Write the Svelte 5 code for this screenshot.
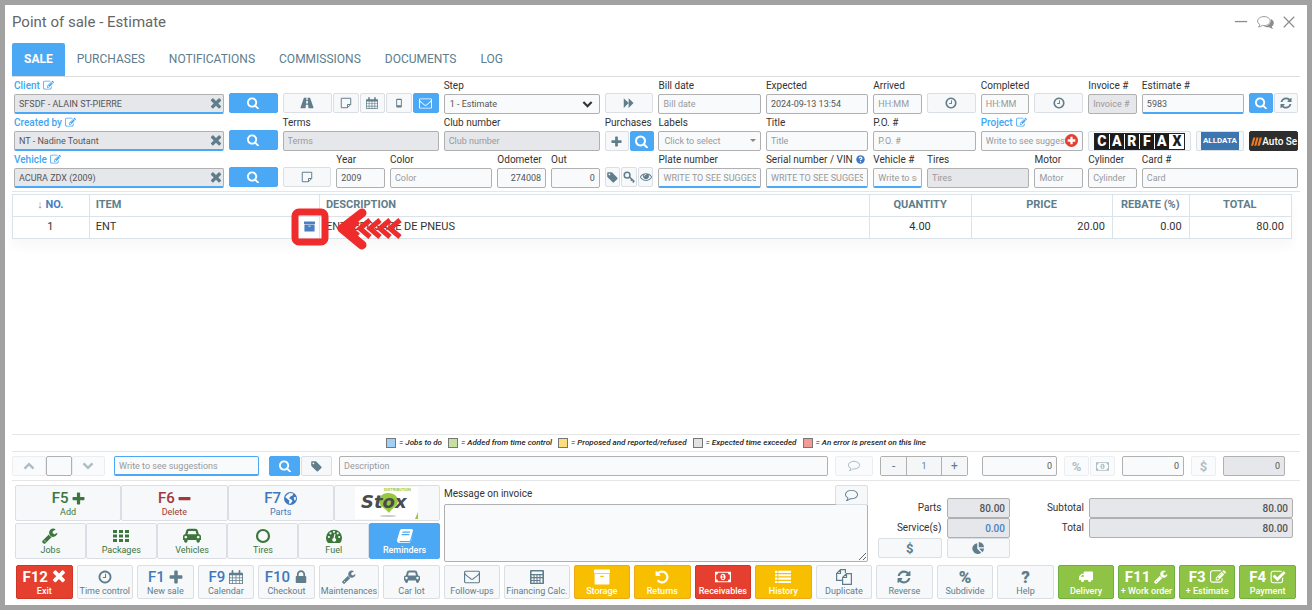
<script lang="ts">
    // [viewBox, shape markup]
    const icons: Record<string, [string, string]> = {
        search: ["64 64 1664 1664", '<path d="M1216 832q0-185-131.5-316.5t-316.5-131.5-316.5 131.5-131.5 316.5 131.5 316.5 316.5 131.5 316.5-131.5 131.5-316.5zm512 832q0 52-38 90t-90 38q-54 0-90-38l-343-342q-179 124-399 124-143 0-273.5-55.5t-225-150-150-225-55.5-273.5 55.5-273.5 150-225 225-150 273.5-55.5 273.5 55.5 225 150 150 225 55.5 273.5q0 220-124 399l343 343q37 37 37 90z"/>'],
        edit: ["0 0 1792 1792", '<path d="M888 1184l116-116-152-152-116 116v56h96v96h56zm440-720q-16-16-33 1l-350 350q-17 17-1 33t33-1l350-350q17-17 1-33zm80 594v190q0 119-84.5 203.5t-203.5 84.5h-832q-119 0-203.5-84.5t-84.5-203.5v-832q0-119 84.5-203.5t203.5-84.5h832q63 0 117 25 15 7 18 23 3 17-9 29l-49 49q-14 14-32 8-23-6-45-6h-832q-66 0-113 47t-47 113v832q0 66 47 113t113 47h832q66 0 113-47t47-113v-126q0-13 9-22l64-64q15-15 35-7t20 29zm-96-738l288 288-672 672h-288v-288zm444 132l-92 92-288-288 92-92q28-28 68-28t68 28l152 152q28 28 28 68t-28 68z"/>'],
        times: ["200 332 1392 1392", '<path d="M1490 1322q0 40-28 68l-136 136q-28 28-68 28t-68-28l-294-294-294 294q-28 28-68 28t-68-28l-136-136q-28-28-28-68t28-68l294-294-294-294q-28-28-28-68t28-68l136-136q28-28 68-28t68 28l294 294 294-294q28-28 68-28t68 28l136 136q28 28 28 68t-28 68l-294 294 294 294q28 28 28 68z"/>'],
        plus: ["128 64 1536 1536", '<path d="M1600 736v192q0 40-28 68t-68 28h-416v416q0 40-28 68t-68 28h-192q-40 0-68-28t-28-68v-416h-416q-40 0-68-28t-28-68v-192q0-40 28-68t68-28h416v-416q0-40 28-68t68-28h192q40 0 68 28t28 68v416h416q40 0 68 28t28 68z"/>'],
        minus: ["128 64 1536 1536", '<path d="M1600 736v192q0 40-28 68t-68 28h-1216q-40 0-68-28t-28-68v-192q0-40 28-68t68-28h1216q40 0 68 28t28 68z"/>'],
        clock: ["64 64 1664 1664", '<path d="M1024 544v448q0 14-9 23t-23 9h-320q-14 0-23-9t-9-23v-64q0-14 9-23t23-9h224v-352q0-14 9-23t23-9h64q14 0 23 9t9 23zm416 352q0-148-73-273t-198-198-273-73-273 73-198 198-73 273 73 273 198 198 273 73 273-73 198-198 73-273zm224 0q0 209-103 385.5t-279.5 279.5-385.5 103-385.5-103-279.5-279.5-103-385.5 103-385.5 279.5-279.5 385.5-103 385.5 103 279.5 279.5 103 385.5z"/>'],
        refresh: ["64 64 1664 1664", '<path d="M1639 1056q0 5-1 7-64 268-268 434.5t-478 166.5q-146 0-282.5-55t-243.5-157l-129 129q-19 19-45 19t-45-19-19-45v-448q0-26 19-45t45-19h448q26 0 45 19t19 45-19 45l-137 137q71 66 161 102t187 36q134 0 250-65t186-179q11-17 53-117 8-23 30-23h192q13 0 22.5 9.5t9.5 22.5zm25-800v448q0 26-19 45t-45 19h-448q-26 0-45-19t-19-45 19-45l138-138q-148-137-349-137-134 0-250 65t-186 179q-11 17-53 117-8 23-30 23h-199q-13 0-22.5-9.5t-9.5-22.5v-7q65-268 270-434.5t480-166.5q146 0 284 55.5t245 156.5l130-129q19-19 45-19t45 19 19 45z"/>'],
        wrench: ["64 64 1728 1728", '<path d="M448 1472q0-26-19-45t-45-19-45 19-19 45 19 45 45 19 45-19 19-45zm644-420l-682 682q-37 37-90 37-52 0-91-37l-106-108q-38-36-38-90 0-53 38-91l681-681q39 98 114.5 173.5t173.5 114.5zm634-435q0 39-23 106-47 134-164.5 217.5t-258.5 83.5q-185 0-316.5-131.5t-131.5-316.5 131.5-316.5 316.5-131.5q58 0 121.5 16.5t107.5 46.5q16 11 16 28t-16 28l-293 169v224l193 107q5-3 79-48.5t135.5-81 70.5-35.5q15 0 23.5 10t8.5 25z"/>'],
        lock: ["256 100 1280 1536", '<path d="M640 768h512v-192q0-106-75-181t-181-75-181 75-75 181v192zm832 96v576q0 40-28 68t-68 28h-960q-40 0-68-28t-28-68v-576q0-40 28-68t68-28h32v-192q0-184 132-316t316-132 316 132 132 316v192h32q40 0 68 28t28 68z"/>'],
        archive: ["64 96 1664 1600", '<path d="M1088 832q0-26-19-45t-45-19h-256q-26 0-45 19t-19 45 19 45 45 19h256q26 0 45-19t19-45zm576-192v960q0 26-19 45t-45 19h-1408q-26 0-45-19t-19-45v-960q0-26 19-45t45-19h1408q26 0 45 19t19 45zm64-448v256q0 26-19 45t-45 19h-1536q-26 0-45-19t-19-45v-256q0-26 19-45t45-19h1536q26 0 45 19t19 45z"/>'],
        undo: ["64 64 1664 1664", '<path d="M1664 896q0 156-61 298t-164 245-245 164-298 61q-172 0-327-72.5t-264-204.5q-7-10-6.5-22.5t8.5-20.5l137-138q10-9 25-9 16 2 23 12 73 95 179 147t225 52q104 0 198.5-40.5t163.5-109.5 109.5-163.5 40.5-198.5-40.5-198.5-109.5-163.5-163.5-109.5-198.5-40.5q-98 0-188 35.5t-160 101.5l137 138q31 30 14 69-17 40-59 40h-448q-26 0-45-19t-19-45v-448q0-42 40-59 39-17 69 14l130 129q107-101 244.5-156.5t284.5-55.5q156 0 298 61t245 164 164 245 61 298z"/>'],
        envelope: ["0 64 1792 1792", '<path d="M1664 1504v-768q-32 36-69 66-268 206-426 338-51 43-83 67t-86.5 48.5-102.5 24.5h-2q-48 0-102.5-24.5t-86.5-48.5-83-67q-158-132-426-338-37-30-69-66v768q0 13 9.5 22.5t22.5 9.5h1472q13 0 22.5-9.5t9.5-22.5zm0-1051v-24.5l-.5-13-3-12.5-5.5-9-9-7.5-14-2.5h-1472q-13 0-22.5 9.5t-9.5 22.5q0 168 147 284 193 152 401 317 6 5 35 29.5t46 37.5 44.5 31.5 50.5 27.5 43 9h2q20 0 43-9t50.5-27.5 44.5-31.5 46-37.5 35-29.5q208-165 401-317 54-43 100.5-115.5t46.5-131.5zm128-37v1088q0 66-47 113t-113 47h-1472q-66 0-113-47t-47-113v-1088q0-66 47-113t113-47h1472q66 0 113 47t47 113z"/>'],
        comment: ["0 128 1792 1792", '<path d="M896 384q-204 0-381.5 69.5t-282 187.5-104.5 255q0 112 71.5 213.5t201.5 175.5l87 50-27 96q-24 91-70 172 152-63 275-171l43-38 57 6q69 8 130 8 204 0 381.5-69.5t282-187.5 104.5-255-104.5-255-282-187.5-381.5-69.5zm896 512q0 174-120 321.5t-326 233-450 85.5q-70 0-145-8-198 175-460 242-49 14-114 22h-5q-15 0-27-10.5t-16-27.5v-1q-3-4-.5-12t2-10 4.500-9.500l6-9 7-8.500 8-9q7-8 31-34.500t34.500-38 31-39.500 32.500-51 27-59 26-76q-157-89-247.500-220t-90.500-281q0-174 120-321.500t326-233 450-85.500 450 85.500 326 233 120 321.500z"/>'],
        tag: ["100 100 1600 1600", '<path d="M576 448q0-53-37.5-90.5t-90.5-37.5-90.5 37.5-37.5 90.5 37.5 90.5 90.5 37.5 90.5-37.5 37.5-90.5zm1067 576q0 53-37 90l-491 492q-39 37-91 37-53 0-90-37l-715-716q-38-37-64.5-101t-26.5-117v-416q0-52 38-90t90-38h416q53 0 117 26.5t102 64.5l715 714q37 39 37 91z"/>'],
        eye: ["0 64 1792 1792", '<path d="M1664 960q-152-236-381-353 61 104 61 225 0 185-131.5 316.5t-316.5 131.5-316.5-131.5-131.5-316.5q0-121 61-225-229 117-381 353 133 205 333.5 326.5t434.5 121.5 434.5-121.5 333.5-326.5zm-720-384q0-20-14-34t-34-14q-125 0-214.5 89.5t-89.5 214.5q0 20 14 34t34 14 34-14 14-34q0-86 61-147t147-61q20 0 34-14t14-34zm848 384q0 34-20 69-140 230-376.5 368.5t-499.5 138.5-499.5-139-376.5-368q-20-35-20-69t20-69q140-229 376.5-368t499.5-139 499.5 139 376.5 368q20 35 20 69z"/>'],
        check: ["0 0 1792 1664", '<path d="M1472 930v318q0 119-84.5 203.5t-203.5 84.5h-832q-119 0-203.5-84.5t-84.5-203.5v-832q0-119 84.5-203.5t203.5-84.5h832q63 0 117 25 15 7 18 23 3 17-9 29l-49 49q-10 10-23 10-3 0-9-2-23-6-45-6h-832q-66 0-113 47t-47 113v832q0 66 47 113t113 47h832q66 0 113-47t47-113v-254q0-13 9-22l64-64q10-10 23-10 6 0 12 3 20 8 20 29zm231-489l-814 814q-24 24-57 24t-57-24l-430-430q-24-24-24-57t24-57l110-110q24-24 57-24t57 24l263 263 647-647q24-24 57-24t57 24l110 110q24 24 24 57t-24 57z"/>'],
        car: ["0 128 2048 1664", '<path d="M480 1088q0-66-47-113t-113-47-113 47-47 113 47 113 113 47 113-47 47-113zm36-320h1016l-89-357q-2-8-14-17.5t-21-9.5h-768q-9 0-21 9.5t-14 17.5zm1372 320q0-66-47-113t-113-47-113 47-47 113 47 113 113 47 113-47 47-113zm160-96v384q0 14-9 23t-23 9h-96v128q0 80-56 136t-136 56-136-56-56-136v-128h-1024v128q0 80-56 136t-136 56-136-56-56-136v-128h-96q-14 0-23-9t-9-23v-384q0-93 65.5-158.5t158.5-65.5h28l105-419q23-94 104-157.5t179-63.5h768q98 0 179 63.5t104 157.5l105 419h28q93 0 158.5 65.5t65.5 158.5z"/>'],
        road: ["0 0 16 14", '<path fill-rule="evenodd" d="M4.500 1h2.900l-.2 2.500h1.600L8.600 1h2.900l3.900 11.200q.3.800-.5.800H9.600l-.3-4H6.700l-.3 4H1.100q-.8 0-.5-.8zM7.100 4.500 6.900 7.500h2.200l-.2-3z"/>'],
        note: ["0 0 16 16", '<path fill="none" stroke="currentColor" stroke-width="1.300" d="M1.700 1.700h12.600v8.300l-4.300 4.300H1.700zM14.300 10H10v4.300"/>'],
        calendar: ["0 0 16 16", '<path fill-rule="evenodd" d="M1 3h2V1q0-1 1-1t1 1v2h6V1q0-1 1-1t1 1v2h2q1 0 1 1v11q0 1-1 1H1q-1 0-1-1V4q0-1 1-1zM1 6v2.600h2.700V6zm3.500 0v2.600h3V6zm3.900 0v2.600h3V6zm3.800 0v2.600H15V6zM1 9.400v2.200h2.700V9.400zm3.500 0v2.200h3V9.400zm3.900 0v2.200h3V9.400zm3.800 0v2.200H15V9.400zM1 12.500V15h2.700v-2.500zm3.500 0V15h3v-2.500zm3.900 0V15h3v-2.500zm3.800 0V15H15v-2.500z"/>'],
        mobile: ["0 0 16 16", '<path fill-rule="evenodd" d="M5 1h6q1.500 0 1.500 1.500v11Q12.500 15 11 15H5q-1.500 0-1.500-1.500v-11Q3.500 1 5 1zm0 2v8.500h6V3z"/>'],
        forward: ["0 0 16 16", '<path d="M1 1.500 7.500 8V1.500L14 8l-6.500 6.500V8L1 14.500z"/>'],
        key: ["0 0 16 16", '<g fill="none" stroke="currentColor" stroke-width="2"><circle cx="5.500" cy="5.500" r="3.800"/><path d="m8.500 8 6 5.500M10.500 13l2-2.600M13 15.300l2-2.400"/></g>'],
        question: ["0 0 16 16", '<circle cx="8" cy="8" r="7.500"/><path fill="none" stroke="#fff" stroke-width="2.200" d="M5.500 6q.2-2.300 2.500-2.300T10.500 6Q10.500 7.300 8 8.200v1.300M8 10.800V13"/>'],
        plusCircle: ["0 0 16 16", '<circle cx="8" cy="8" r="8"/><path fill="none" stroke="#fff" stroke-width="2.800" d="M8 3.300v9.400M3.300 8h9.400"/>'],
        globe: ["0 0 16 16", '<circle cx="8" cy="8" r="8"/><path fill="#f6f8fa" d="m7 1.200 4.500.7-1 2.300L8 5.500 6.200 7.600l2.800 1.600 1.500 1.800-2.500 3.600L6 14l.5-3.500L3.500 8 1.500 6l2.600-3zM12 6l2.800.6-.4 3.200-1.600.6z"/>'],
        grid: ["0 0 16 12", '<path d="M0 0h4v3H0zM6 0h4v3H6zM12 0h4v3h-4zM0 4.500h4v3H0zM6 4.500h4v3H6zM12 4.500h4v3h-4zM0 9h4v3H0zM6 9h4v3H6zM12 9h4v3h-4z"/>'],
        circle: ["0 0 16 16", '<circle cx="8" cy="8" r="6" fill="none" stroke="currentColor" stroke-width="2.200"/>'],
        gauge: ["0 0 16 14", '<path d="M2 14a8 8 0 1 1 12 0z"/><g fill="#f6f8fa"><circle cx="2.900" cy="8" r="1.100"/><circle cx="4.500" cy="4.300" r="1.100"/><circle cx="8" cy="2.800" r="1.100"/><circle cx="11.700" cy="4.300" r="1.100"/><circle cx="13.200" cy="8" r="1.100"/><path d="m8.500 4.800 1 .2-.6 4A2 2 0 1 1 7.500 9z"/></g>'],
        book: ["0 0 16 14", '<path fill-rule="evenodd" d="M5.200 0h9.600q1.400.3 1.100 1.800l-2.700 9.400q-.3.900-1.300.9H3.200q-1 0-1 .4.100.7 1 .7h9.800q.7 0 1-.8L16.400 4l-2.900 9.300q-.3.700-1 .7H2.500Q.2 14-.1 11.500L2.900 1.400Q3.500 0 5.200 0zm.4 2.500-.3 1.200h7.600l.4-1.200zm-.8 2.600-.4 1.200h7.700l.4-1.200z"/>'],
        calculator: ["0 0 16 16", '<path fill-rule="evenodd" d="M1 0h14q1 0 1 1v14q0 1-1 1H1q-1 0-1-1V1q0-1 1-1zm.8 1.800v2.700h12.400V1.800zm0 4.200v2h2.200V6zm3.400 0v2h2.200V6zm3.400 0v2h2.200V6zm3.400 0v2h2.200V6zm-10.200 3.300v2h2.200v-2zm3.400 0v2h2.200v-2zm3.400 0v2h2.200v-2zm3.400 0v5.200h2.200V9.300zM1.800 12.500v2h2.200v-2zm3.400 0v2h2.200v-2zm3.400 0v2h2.200v-2z"/>'],
        money: ["0 0 18 12", '<path fill-rule="evenodd" d="M0 0h18v12H0zm3.500 1.300A2.300 2.300 0 0 1 1.300 3.500v5a2.300 2.300 0 0 1 2.200 2.200h11a2.300 2.300 0 0 1 2.200-2.200v-5a2.300 2.300 0 0 1-2.200-2.200zM9 2.300c1.700 0 2.900 1.700 2.900 3.700S10.700 9.700 9 9.700 6.100 8 6.100 6 7.300 2.300 9 2.300zM8.600 3.500 7.400 4.600l.5.6.5-.3v2.600h-.9v.8h2.800v-.8h-.8v-4z"/>'],
        list: ["0 0 18 14", '<path d="M0 0h2.700v2.400H0zM3.700 0H18v2.400H3.700zM0 3.800h2.700v2.400H0zM3.700 3.800H18v2.400H3.700zM0 7.600h2.700V10H0zM3.700 7.600H18V10H3.700zM0 11.400h2.700v2.400H0zM3.700 11.400H18v2.400H3.700z"/>'],
        copy: ["0 0 16 16", '<path fill="none" stroke="currentColor" stroke-width="1.200" d="M6.500 11.400H.6V4.500L4.500.6h4.900V4M4.500.8v3.700H.8M6.600 8.500l3.900-3.900h4.900v10.800H6.600zM10.500 4.800v3.700H6.800"/>'],
        truck: ["0 0 18 14", '<path fill-rule="evenodd" d="M7 0h10q1 0 1 1v10h-2a2.200 2.200 0 0 1-4.400 0H6.700a2.200 2.200 0 0 1-4.400 0H0V7q0-.8.500-1.400L3 3.300q.5-.4 1-.4h2V1q0-1 1-1zM2 6.800h4V4.400H4.200z"/><circle cx="4.500" cy="11.500" r="1.900"/><circle cx="13.800" cy="11.500" r="1.900"/>'],
        pie: ["0 0 16 16", '<path d="M7 1.500V9l5.300 5.200A7.200 7.200 0 1 1 7 1.500zM9 0a7 7 0 0 1 7 7H9zM9.500 8.500H16a7 7 0 0 1-2 5z"/>'],
        up: ["0 0 16 16", '<path fill="none" stroke="currentColor" stroke-width="3.200" d="m2 11.500 6-6 6 6"/>'],
        down: ["0 0 16 16", '<path fill="none" stroke="currentColor" stroke-width="3.200" d="m2 4.500 6 6 6-6"/>'],
        winMin: ["0 0 16 16", '<path stroke="currentColor" stroke-width="1.500" d="M1 7.500h14"/>'],
        winClose: ["0 0 16 16", '<path fill="none" stroke="currentColor" stroke-width="1.600" d="m1 1 14 14M15 1 1 15"/>'],
        chat: ["0 0 17 13", '<path d="M13.800 3c2 .9 3 2.200 3 3.900 0 1.400-.8 2.600-2 3.400q.2 1.500 1.500 2.500-2.500-.2-4-1.600-3 .6-5.600-.9c4.300 0 7.800-2.700 7.100-7.300z"/><path fill="#fff" stroke="currentColor" stroke-width=".9" d="M7 .6c3.600 0 6.200 2 6.200 4.500S10.600 9.600 7 9.600q-.8 0-1.600-.2Q4 10.700 1.500 11q1.200-1 1.300-2.500C1.400 7.700.6 6.500.6 5.100.600 2.600 3.400.600 7 .600z"/>'],
    };

    const tabs = ["Sale", "Purchases", "Notifications", "Commissions", "Documents", "Log"];

    const lines = [
        { no: 1, item: "ENT", description: "ENTREPOSAGE DE PNEUS", quantity: "4.00", price: "20.00", rebate: "0.00", total: "80.00" },
    ];

    const legend = [
        { color: "#9fd0f8", text: "Jobs to do" },
        { color: "#c5e1a0", text: "Added from time control" },
        { color: "#fbdf7d", text: "Proposed and reported/refused" },
        { color: "#e2e2e2", text: "Expected time exceeded" },
        { color: "#f29b94", text: "An error is present on this line" },
    ];

    const tools = [
        { icon: "wrench", text: "Jobs" },
        { icon: "grid", text: "Packages" },
        { icon: "car", text: "Vehicles" },
        { icon: "circle", text: "Tires" },
        { icon: "gauge", text: "Fuel" },
        { icon: "book", text: "Reminders", tone: "blue" },
    ];

    const actions = [
        { key: "F12", icon: "times", text: "Exit", tone: "red" },
        { icon: "clock", text: "Time control" },
        { key: "F1", icon: "plus", text: "New sale" },
        { key: "F9", icon: "calendar", text: "Calendar" },
        { key: "F10", icon: "lock", text: "Checkout" },
        { icon: "wrench", text: "Maintenances" },
        { icon: "car", text: "Car lot" },
        { icon: "envelope", text: "Follow-ups" },
        { icon: "calculator", text: "Financing Calc." },
        { icon: "archive", text: "Storage", tone: "yellow" },
        { icon: "undo", text: "Returns", tone: "yellow" },
        { icon: "money", text: "Receivables", tone: "red" },
        { icon: "list", text: "History", tone: "yellow" },
        { icon: "copy", text: "Duplicate" },
        { icon: "refresh", text: "Reverse" },
        { glyph: "%", text: "Subdivide" },
        { glyph: "?", text: "Help" },
        { icon: "truck", text: "Delivery", tone: "green" },
        { key: "F11", icon: "wrench", text: "+ Work order", tone: "green" },
        { key: "F3", icon: "edit", text: "+ Estimate", tone: "green" },
        { key: "F4", icon: "check", text: "Payment", tone: "green" },
    ];

    const wideIcons = ["car", "money", "list", "archive", "envelope", "edit", "check", "copy"];

    let activeTab = $state("Sale");
</script>

{#snippet icon(name: string, size = 12)}
    <svg class="icon" viewBox={icons[name][0]} width={size} height={size} fill="currentColor" aria-hidden="true">{@html icons[name][1]}</svg>
{/snippet}

{#snippet field(id: string, label: string, span: number, value = "", placeholder = "", kind = "")}
    <div class="cell span-{span}">
        <label for={id}>{label}</label>
        <input {id} class={kind} {value} {placeholder} />
    </div>
{/snippet}

{#snippet picker(id: string, label: string, value: string)}
    <div class="cell span-4">
        <label class="link" for={id}>{label} {@render icon("edit", 11)}</label>
        <div class="clearable">
            <input {id} class="locked required" {value} readonly />
            <button class="clear" aria-label="Clear {label}">{@render icon("times", 12)}</button>
        </div>
    </div>
    <div class="cell raised"><button class="btn blue" aria-label="Search {label}">{@render icon("search", 12)}</button></div>
{/snippet}

<div class="window">
    <header>
        <h1>Point of sale - Estimate</h1>
        <div class="controls">
            <button aria-label="Minimize">{@render icon("winMin", 14)}</button>
            <button aria-label="Chat">{@render icon("chat", 17)}</button>
            <button aria-label="Close">{@render icon("winClose", 12)}</button>
        </div>
    </header>

    <nav>
        {#each tabs as tab}
            <button class:active={activeTab === tab} onclick={() => (activeTab = tab)}>{tab}</button>
        {/each}
    </nav>

    <form class="sale" onsubmit={(e) => e.preventDefault()}>
        {@render picker("client", "Client", "SFSDF - ALAIN ST-PIERRE")}
        <div class="cell span-3 raised">
            <div class="group">
                <button class="btn wide" aria-label="Road test">{@render icon("road", 14)}</button>
                <button class="btn" aria-label="Note">{@render icon("note", 12)}</button>
                <button class="btn" aria-label="Calendar">{@render icon("calendar", 12)}</button>
                <button class="btn" aria-label="Text message">{@render icon("mobile", 10)}</button>
                <button class="btn blue" aria-label="Email">{@render icon("envelope", 13)}</button>
            </div>
        </div>
        <div class="cell span-3">
            <label for="step">Step</label>
            <div class="select">
                <select id="step"><option>1 - Estimate</option></select>
                {@render icon("down", 11)}
            </div>
        </div>
        <div class="cell raised"><button class="btn" aria-label="Next step">{@render icon("forward", 12)}</button></div>
        {@render field("bill-date", "Bill date", 2, "", "Bill date")}
        {@render field("expected", "Expected", 2, "2024-09-13 13:54")}
        {@render field("arrived", "Arrived", 1, "", "HH:MM")}
        <div class="cell raised"><button class="btn" aria-label="Set arrival">{@render icon("clock", 12)}</button></div>
        {@render field("completed", "Completed", 1, "", "HH:MM")}
        <div class="cell raised"><button class="btn" aria-label="Set completion">{@render icon("clock", 12)}</button></div>
        {@render field("invoice", "Invoice #", 1, "", "Invoice #", "locked")}
        {@render field("estimate", "Estimate #", 2, "5983", "", "required")}
        <div class="cell raised">
            <div class="group">
                <button class="btn blue" aria-label="Search estimate">{@render icon("search", 12)}</button>
                <button class="btn" aria-label="Refresh">{@render icon("refresh", 12)}</button>
            </div>
        </div>

        {@render picker("created-by", "Created by", "NT - Nadine Toutant")}
        {@render field("terms", "Terms", 3, "", "Terms", "locked")}
        {@render field("club", "Club number", 3, "", "Club number", "locked")}
        <div class="cell">
            <span class="label">Purchases</span>
            <div class="group">
                <button class="btn" aria-label="Add purchase">{@render icon("plus", 11)}</button>
                <button class="btn blue" aria-label="Search purchases">{@render icon("search", 13)}</button>
            </div>
        </div>
        <div class="cell span-2">
            <label for="labels">Labels</label>
            <div class="select muted">
                <select id="labels"><option>Click to select</option></select>
                <i class="caret"></i>
            </div>
        </div>
        {@render field("title", "Title", 2, "", "Title")}
        {@render field("po", "P.O. #", 2, "", "P.O. #")}
        <div class="cell span-2">
            <label class="link" for="project">Project {@render icon("edit", 11)}</label>
            <div class="clearable">
                <input id="project" placeholder="Write to see suggestions" />
                <button class="add" aria-label="Add project">{@render icon("plusCircle", 13)}</button>
            </div>
        </div>
        <div class="cell span-2">
            <button class="btn" aria-label="Carfax">
                <span class="carfax">{#each "CARFAX" as letter}<b>{letter}</b>{/each}</span>
            </button>
        </div>
        <div class="cell"><button class="btn"><span class="alldata">ALLDATA</span></button></div>
        <div class="cell">
            <button class="btn autoserve">
                <svg viewBox="0 0 12 9" width="11" height="9" aria-hidden="true"><path fill="#f47b20" d="M2.500 0h2.300L2.300 9H0zM6 0h2.300L5.800 9H3.500zM9.500 0H12L9.500 9H7z" /></svg>Auto Se
            </button>
        </div>

        {@render picker("vehicle", "Vehicle", "ACURA ZDX (2009)")}
        <div class="cell raised"><button class="btn" aria-label="Vehicle note">{@render icon("note", 12)}</button></div>
        {@render field("year", "Year", 1, "2009")}
        {@render field("color", "Color", 2, "", "Color")}
        {@render field("odometer", "Odometer", 1, "274008", "", "number")}
        {@render field("out", "Out", 1, "0", "", "number")}
        <div class="cell raised">
            <div class="group">
                <button class="btn" aria-label="Tag">{@render icon("tag", 11)}</button>
                <button class="btn" aria-label="Key">{@render icon("key", 12)}</button>
                <button class="btn" aria-label="View">{@render icon("eye", 12)}</button>
            </div>
        </div>
        {@render field("plate", "Plate number", 2, "", "WRITE TO SEE SUGGESTIONS", "required")}
        <div class="cell span-2">
            <label for="serial">Serial number / VIN <span class="help">{@render icon("question", 9)}</span></label>
            <input id="serial" class="required" placeholder="WRITE TO SEE SUGGESTIONS" />
        </div>
        {@render field("vehicle-no", "Vehicle #", 1, "", "Write to see suggestions", "required")}
        {@render field("tires", "Tires", 2, "", "Tires", "locked")}
        {@render field("motor", "Motor", 1, "", "Motor")}
        {@render field("cylinder", "Cylinder", 1, "", "Cylinder")}
        {@render field("card", "Card #", 3, "", "Card")}
    </form>

    <main>
        <table>
            <thead>
                <tr>
                    <th class="w6 center sorted"><span>↓</span> NO.</th>
                    <th class="w18">ITEM</th>
                    <th class="w43">DESCRIPTION</th>
                    <th class="w8 center">QUANTITY</th>
                    <th class="w11 center">PRICE</th>
                    <th class="w6 center">REBATE (%)</th>
                    <th class="w8 center">TOTAL</th>
                </tr>
            </thead>
            <tbody>
                {#each lines as line}
                    <tr>
                        <td class="center">{line.no}</td>
                        <td class="item-cell">
                            <div class="item">
                                {line.item}
                                <span class="stored">
                                    {@render icon("archive", 11)}
                                    <svg class="pointer" viewBox="0 0 112 42" width="112" height="42" fill="none" stroke="#ef2b2b" stroke-linejoin="round" aria-hidden="true">
                                        <rect x="4" y="4" width="30" height="30" rx="4" stroke-width="7" />
                                        <path stroke-width="9" stroke-linecap="round" d="M71 5 51 20.500 71 37" />
                                        <path stroke-width="9" d="M66 12l-10 8.500 10 8.500" />
                                        <path stroke-width="5" stroke-linejoin="miter" d="M79 12l-10 8.500 10 8.500M89 12l-10 8.500 10 8.500M99 12l-10 8.500 10 8.500M109 12l-10 8.500 10 8.500" />
                                    </svg>
                                </span>
                            </div>
                        </td>
                        <td>{line.description}</td>
                        <td class="center">{line.quantity}</td>
                        <td class="right">{line.price}</td>
                        <td class="right">{line.rebate}</td>
                        <td class="right">{line.total}</td>
                    </tr>
                {/each}
            </tbody>
        </table>
    </main>

    <div class="legend">
        {#each legend as entry}
            <span><i style="background: {entry.color}"></i> = {entry.text}</span>
        {/each}
    </div>

    <div class="entry">
        <div class="mover">
            <button class="btn" disabled aria-label="Move up">{@render icon("up", 12)}</button>
            <input class="pos" aria-label="Position" />
            <button class="btn" disabled aria-label="Move down">{@render icon("down", 12)}</button>
        </div>
        <input class="code" aria-label="Item" placeholder="Write to see suggestions" />
        <div class="pair">
            <button class="btn blue" aria-label="Search item">{@render icon("search", 12)}</button>
            <button class="btn" aria-label="Labels">{@render icon("tag", 11)}</button>
        </div>
        <input class="desc" aria-label="Description" placeholder="Description" />
        <button class="btn note" disabled aria-label="Comment">{@render icon("comment", 12)}</button>
        <div class="stepper">
            <button aria-label="Less">-</button>
            <input value="1" aria-label="Quantity" />
            <button aria-label="More">+</button>
        </div>
        <input class="number price" value="0" aria-label="Price" />
        <div class="pair small">
            <button class="btn" disabled>%</button>
            <button class="btn" disabled aria-label="Amount">{@render icon("money", 13)}</button>
        </div>
        <input class="number amount" value="0" aria-label="Rebate" />
        <button class="btn dollar" disabled>$</button>
        <input class="number amount locked" value="0" readonly aria-label="Line total" />
    </div>

    <section class="bottom">
        <div class="pads">
            <div class="pad-row">
                <button class="pad green-text"><span class="top"><b>F5</b>{@render icon("plus", 13)}</span>Add</button>
                <button class="pad red-text"><span class="top"><b>F6</b>{@render icon("minus", 13)}</span>Delete</button>
                <button class="pad blue-text"><span class="top"><b>F7</b>{@render icon("globe", 13)}</span>Parts</button>
                <button class="pad" aria-label="Stox distribution">
                    <svg viewBox="0 0 63 32" width="63" height="32" aria-hidden="true">
                        <path fill="#fff" d="M0 0h63v32H0z" />
                        <path fill="#97c93d" d="M33 6c7 0 10 4 10 8 0 5-6 7-9 12-4-5-10-7-10-12 0-4 3-8 9-8zM63 25v7h-3z" />
                        <ellipse cx="33" cy="29" rx="8" ry="1" fill="#ccc" />
                        <text x="6" y="21" class="stox">Stox</text>
                        <text x="29" y="4" class="distribution">DISTRIBUTION</text>
                    </svg>
                </button>
            </div>
            <div class="pad-row">
                {#each tools as tool}
                    <button class="pad {tool.tone ?? 'green-text'}"><span class="top">{@render icon(tool.icon, tool.icon === "car" ? 18 : 16)}</span>{tool.text}</button>
                {/each}
            </div>
        </div>
        <div class="message">
            <div class="message-head">
                <label for="message">Message on invoice</label>
                <button class="btn" aria-label="Saved messages">{@render icon("comment", 13)}</button>
            </div>
            <textarea id="message"></textarea>
        </div>
        <div class="sums parts">
            <label for="parts">Parts</label>
            <input id="parts" class="number locked" value="80.00" readonly />
            <label for="services">Service(s)</label>
            <input id="services" class="number locked accent" value="0.00" readonly />
            <button class="btn">$</button>
            <button class="btn" aria-label="Breakdown">{@render icon("pie", 12)}</button>
        </div>
        <div class="sums totals">
            <label for="subtotal">Subtotal</label>
            <input id="subtotal" class="number locked" value="80.00" readonly />
            <label for="total">Total</label>
            <input id="total" class="number locked" value="80.00" readonly />
        </div>
    </section>

    <footer>
        {#each actions as action}
            <button class="pad {action.tone ?? 'plain'}">
                <span class="top">
                    {#if action.key}<b>{action.key}</b>{/if}
                    {#if action.icon}{@render icon(action.icon, wideIcons.includes(action.icon) ? 16 : 14)}{/if}
                    {#if action.glyph}<b class="glyph">{action.glyph}</b>{/if}
                </span>
                {action.text}
            </button>
        {/each}
    </footer>
</div>

<style>
    :global(body) {
        margin: 0;
    }

    .window {
        box-sizing: border-box;
        min-height: 100vh;
        border: 5px solid #a2a2a2;
        padding: 0 7px 6px;
        background: #fff;
        color: #333;
        display: flex;
        flex-direction: column;
        font-family: Roboto, "Liberation Sans", sans-serif;
        font-size: 10px;
    }

    .window :global(*) {
        box-sizing: border-box;
    }

    button, input, select, textarea {
        font: inherit;
        margin: 0;
        min-width: 0;
    }

    button {
        cursor: pointer;
        padding: 0;
    }

    .icon {
        display: block;
        flex: none;
    }

    header {
        display: flex;
        justify-content: space-between;
        align-items: center;
        height: 34px;
        margin-bottom: 4px;
    }

    h1 {
        margin: 0;
        font-size: 15px;
        font-weight: 400;
        color: #666;
    }

    .controls {
        display: flex;
        align-items: center;
        gap: 9px;
        padding-right: 5px;
    }

    .controls button {
        border: 0;
        background: none;
        color: #8c8c8c;
    }

    nav {
        display: flex;
        border-bottom: 1px solid #ddd;
    }

    nav button {
        height: 33px;
        padding: 0 12px 2px;
        border: 0;
        border-radius: 2px 2px 0 0;
        background: none;
        color: #607d8b;
        font-size: 12px;
        text-transform: uppercase;
    }

    nav .active {
        background: #4ba8f5;
        color: #fff;
        font-weight: 700;
    }

    .sale {
        display: grid;
        grid-template-columns: repeat(24, minmax(0, 1fr));
        column-gap: 5px;
        margin: 0 2px 3px;
    }

    .cell {
        height: 37px;
        display: flex;
        flex-direction: column;
        justify-content: flex-end;
    }

    .raised {
        padding-bottom: 1px;
    }

    .span-2 { grid-column: span 2; }
    .span-3 { grid-column: span 3; }
    .span-4 { grid-column: span 4; }

    label, .label {
        display: flex;
        align-items: center;
        gap: 3px;
        height: 17px;
        font-size: 10px;
        white-space: nowrap;
    }

    .link {
        color: #42a5f5;
        font-weight: 500;
    }

    .help {
        color: #3f78bd;
    }

    input, select, textarea {
        width: 100%;
        height: 20px;
        padding: 0 4px;
        border: 1px solid #b0b0b0;
        border-radius: 2px;
        background: #f8fafc;
        color: #555;
        font-size: 9px;
        outline: none;
    }

    ::placeholder {
        color: #999;
        opacity: 1;
    }

    .required {
        border-bottom: 2px solid #4ba8f5;
    }

    .locked {
        background: #e6e7eb;
    }

    .number {
        text-align: right;
    }

    .accent {
        color: #4a7fc1;
    }

    .clearable, .select {
        position: relative;
    }

    .clearable button {
        position: absolute;
        top: 0;
        right: 2px;
        height: 20px;
        border: 0;
        background: none;
        color: #607d8b;
    }

    .clearable .add {
        right: 5px;
        height: 18px;
        color: #e43f2f;
    }

    .select select {
        appearance: none;
        padding-left: 5px;
    }

    .select .icon, .caret {
        position: absolute;
        right: 7px;
        top: 5px;
        pointer-events: none;
    }

    .muted select {
        color: #999;
    }

    .caret {
        top: 8px;
        right: 5px;
        border: 3px solid transparent;
        border-top-color: #888;
    }

    .btn {
        display: flex;
        align-items: center;
        justify-content: center;
        width: 100%;
        height: 20px;
        border: 1px solid #d9dfe5;
        border-radius: 2px;
        background: #f6f8fa;
        color: #607d8b;
        font-size: 13px;
        font-weight: 700;
    }

    .btn:disabled {
        opacity: 0.5;
    }

    .blue {
        border-color: #4ba8f5;
        background: #4ba8f5;
        color: #fff;
    }

    .group {
        display: flex;
        gap: 1px;
    }

    .group .btn {
        flex: 1;
    }

    .group .wide {
        flex: 2;
    }

    .carfax {
        display: flex;
        gap: 1px;
        border: 1px solid #222;
    }

    .carfax b {
        width: 14px;
        background: #1b1b1b;
        color: #fff;
        font-size: 14px;
        line-height: 15px;
        font-weight: 900;
    }

    .carfax b:last-child {
        background: #fff;
        color: #1b1b1b;
    }

    .alldata {
        padding: 0 2px;
        background: #3c76b0;
        color: #fff;
        font-size: 8px;
        line-height: 18px;
        font-weight: 700;
    }

    .autoserve {
        justify-content: flex-start;
        padding-left: 1px;
        border-color: #2e2e2e;
        background: #2e2e2e;
        color: #fff;
        font-size: 10px;
        font-weight: 500;
        white-space: nowrap;
    }

    .autoserve svg {
        flex: none;
    }

    main {
        flex: 1;
        padding: 2px 8px 0 0;
        border-top: 1px solid #e6e6e6;
    }

    table {
        width: 100%;
        table-layout: fixed;
        border-collapse: collapse;
        font-size: 11px;
        box-shadow: 0 8px 10px rgba(0, 0, 0, 0.03);
    }

    th, td {
        height: 22px;
        padding: 0 7px 2px 6px;
        border: 1px solid #dbe3ea;
        text-align: left;
        white-space: nowrap;
    }

    th {
        color: #607d8b;
        font-weight: 700;
    }

    .sorted {
        color: #4a7fc1;
    }

    .sorted span {
        color: #b06f9c;
        font-weight: 400;
    }

    .center { text-align: center; }
    .right { text-align: right; }
    .w6 { width: 6%; }
    .w8 { width: 8%; }
    .w11 { width: 11%; }
    .w18 { width: 18%; }
    .w43 { width: 43%; }

    .item-cell {
        padding-right: 4px;
    }

    .item {
        display: flex;
        justify-content: space-between;
        align-items: center;
    }

    .stored {
        position: relative;
        color: #4a7fc1;
    }

    .pointer {
        position: absolute;
        top: -13px;
        left: -13px;
        z-index: 1;
        pointer-events: none;
    }

    .legend {
        display: flex;
        justify-content: center;
        align-items: center;
        gap: 6px;
        height: 18px;
        border: solid #e6e6e6;
        border-width: 1px 0;
        color: #222;
        font-size: 8px;
        font-style: italic;
        font-weight: 500;
    }

    .legend i {
        display: inline-block;
        width: 10px;
        height: 10px;
        margin-right: 1px;
        border: 1px solid #777;
        vertical-align: middle;
    }

    .entry {
        display: flex;
        align-items: center;
        gap: 7px;
        height: 29px;
        padding-right: 15px;
        border-bottom: 1px solid #e6e6e6;
    }

    .entry > .btn, .entry > input {
        flex: none;
    }

    .mover {
        display: flex;
        width: 93px;
    }

    .mover .pos {
        flex: none;
        width: 26px;
    }

    .entry .code {
        width: 145px;
        margin: 0 3px 0 2px;
        border-color: #4ba8f5;
        border-bottom-width: 2px;
    }

    .pair {
        display: flex;
        gap: 1px;
        width: 63px;
    }

    .small {
        width: 51px;
    }

    .entry .desc {
        flex: 1;
    }

    .entry .note {
        width: 38px;
    }

    .stepper {
        display: flex;
        width: 88px;
        margin-right: 7px;
        border: 1px solid #b0b0b0;
        border-radius: 2px;
    }

    .stepper > * {
        flex: 1;
        height: 18px;
        border: 0;
        border-radius: 0;
        text-align: center;
        background: #f4f6f8;
        color: #607d8b;
        font-size: 12px;
    }

    .stepper input {
        flex: 1 1 8px;
        border: solid #b0b0b0;
        border-width: 0 1px;
        font-size: 9px;
    }

    .entry .price {
        width: 75px;
    }

    .entry .amount {
        width: 62px;
    }

    .entry .dollar {
        width: 25px;
    }

    .bottom {
        display: flex;
        align-items: flex-start;
        padding: 4px 7px 0 3px;
    }

    .pads {
        flex: 425;
        display: flex;
        flex-direction: column;
        gap: 2px;
    }

    .pad-row {
        display: flex;
    }

    .pad-row .pad {
        flex: 1;
        height: 36px;
    }

    .pad {
        display: flex;
        flex-direction: column;
        align-items: center;
        justify-content: center;
        border: 1px solid #d9dfe5;
        border-radius: 2px;
        background: #f6f8fa;
        color: #607d8b;
        font-size: 9px;
        line-height: 10px;
        white-space: nowrap;
    }

    .top {
        display: flex;
        align-items: center;
        gap: 3px;
        height: 17px;
    }

    .top b {
        font-size: 15px;
        font-weight: 500;
    }

    .green-text { color: #3c763d; }
    .red-text { color: #a03a38; }
    .blue-text { color: #3f78bd; }
    .plain b { color: #3f78bd; }

    .plain .glyph {
        color: #607d8b;
        font-size: 17px;
        font-weight: 900;
    }

    .red, .yellow, .green, .pad.blue {
        color: #fff;
        font-weight: 500;
    }

    .red b, .green b {
        font-weight: 700;
    }

    .red { background: #e43f2f; border-color: #cf3627; }
    .yellow { background: #f8bf00; border-color: #eda71c; }
    .green { background: #8fc345; border-color: #6cb044; }
    .pad.blue { background: #4ba8f5; border-color: #4ba8f5; }

    .stox {
        fill: #4b4b4d;
        font-family: "DejaVu Sans", sans-serif;
        font-size: 18px;
        font-weight: 700;
        font-style: italic;
    }

    .distribution {
        fill: #97c93d;
        font-size: 4px;
        font-weight: 700;
    }

    .message {
        flex: 424;
        margin-left: 4px;
    }

    .message-head {
        display: flex;
        justify-content: space-between;
        height: 19px;
    }

    .message-head .btn {
        width: 33px;
    }

    textarea {
        display: block;
        height: 58px;
        resize: vertical;
    }

    .sums {
        display: grid;
        column-gap: 5px;
        padding-top: 13px;
    }

    .sums label {
        justify-content: flex-end;
        height: 18px;
    }

    .sums input {
        font-size: 10px;
        font-weight: 500;
    }

    .parts {
        flex: 132;
        grid-template-columns: 1fr 1fr;
        margin-left: 10px;
    }

    .totals {
        flex: 247;
        grid-template-columns: 38px 1fr;
        margin-left: 36px;
    }

    footer {
        display: flex;
        gap: 4px;
        margin-top: 3px;
        padding: 0 4px;
    }

    footer .pad {
        flex: 1 0 auto;
        width: 56px;
        min-width: min-content;
        height: 34px;
        padding: 0 1px;
    }

    footer .top {
        gap: 4px;
    }
</style>
